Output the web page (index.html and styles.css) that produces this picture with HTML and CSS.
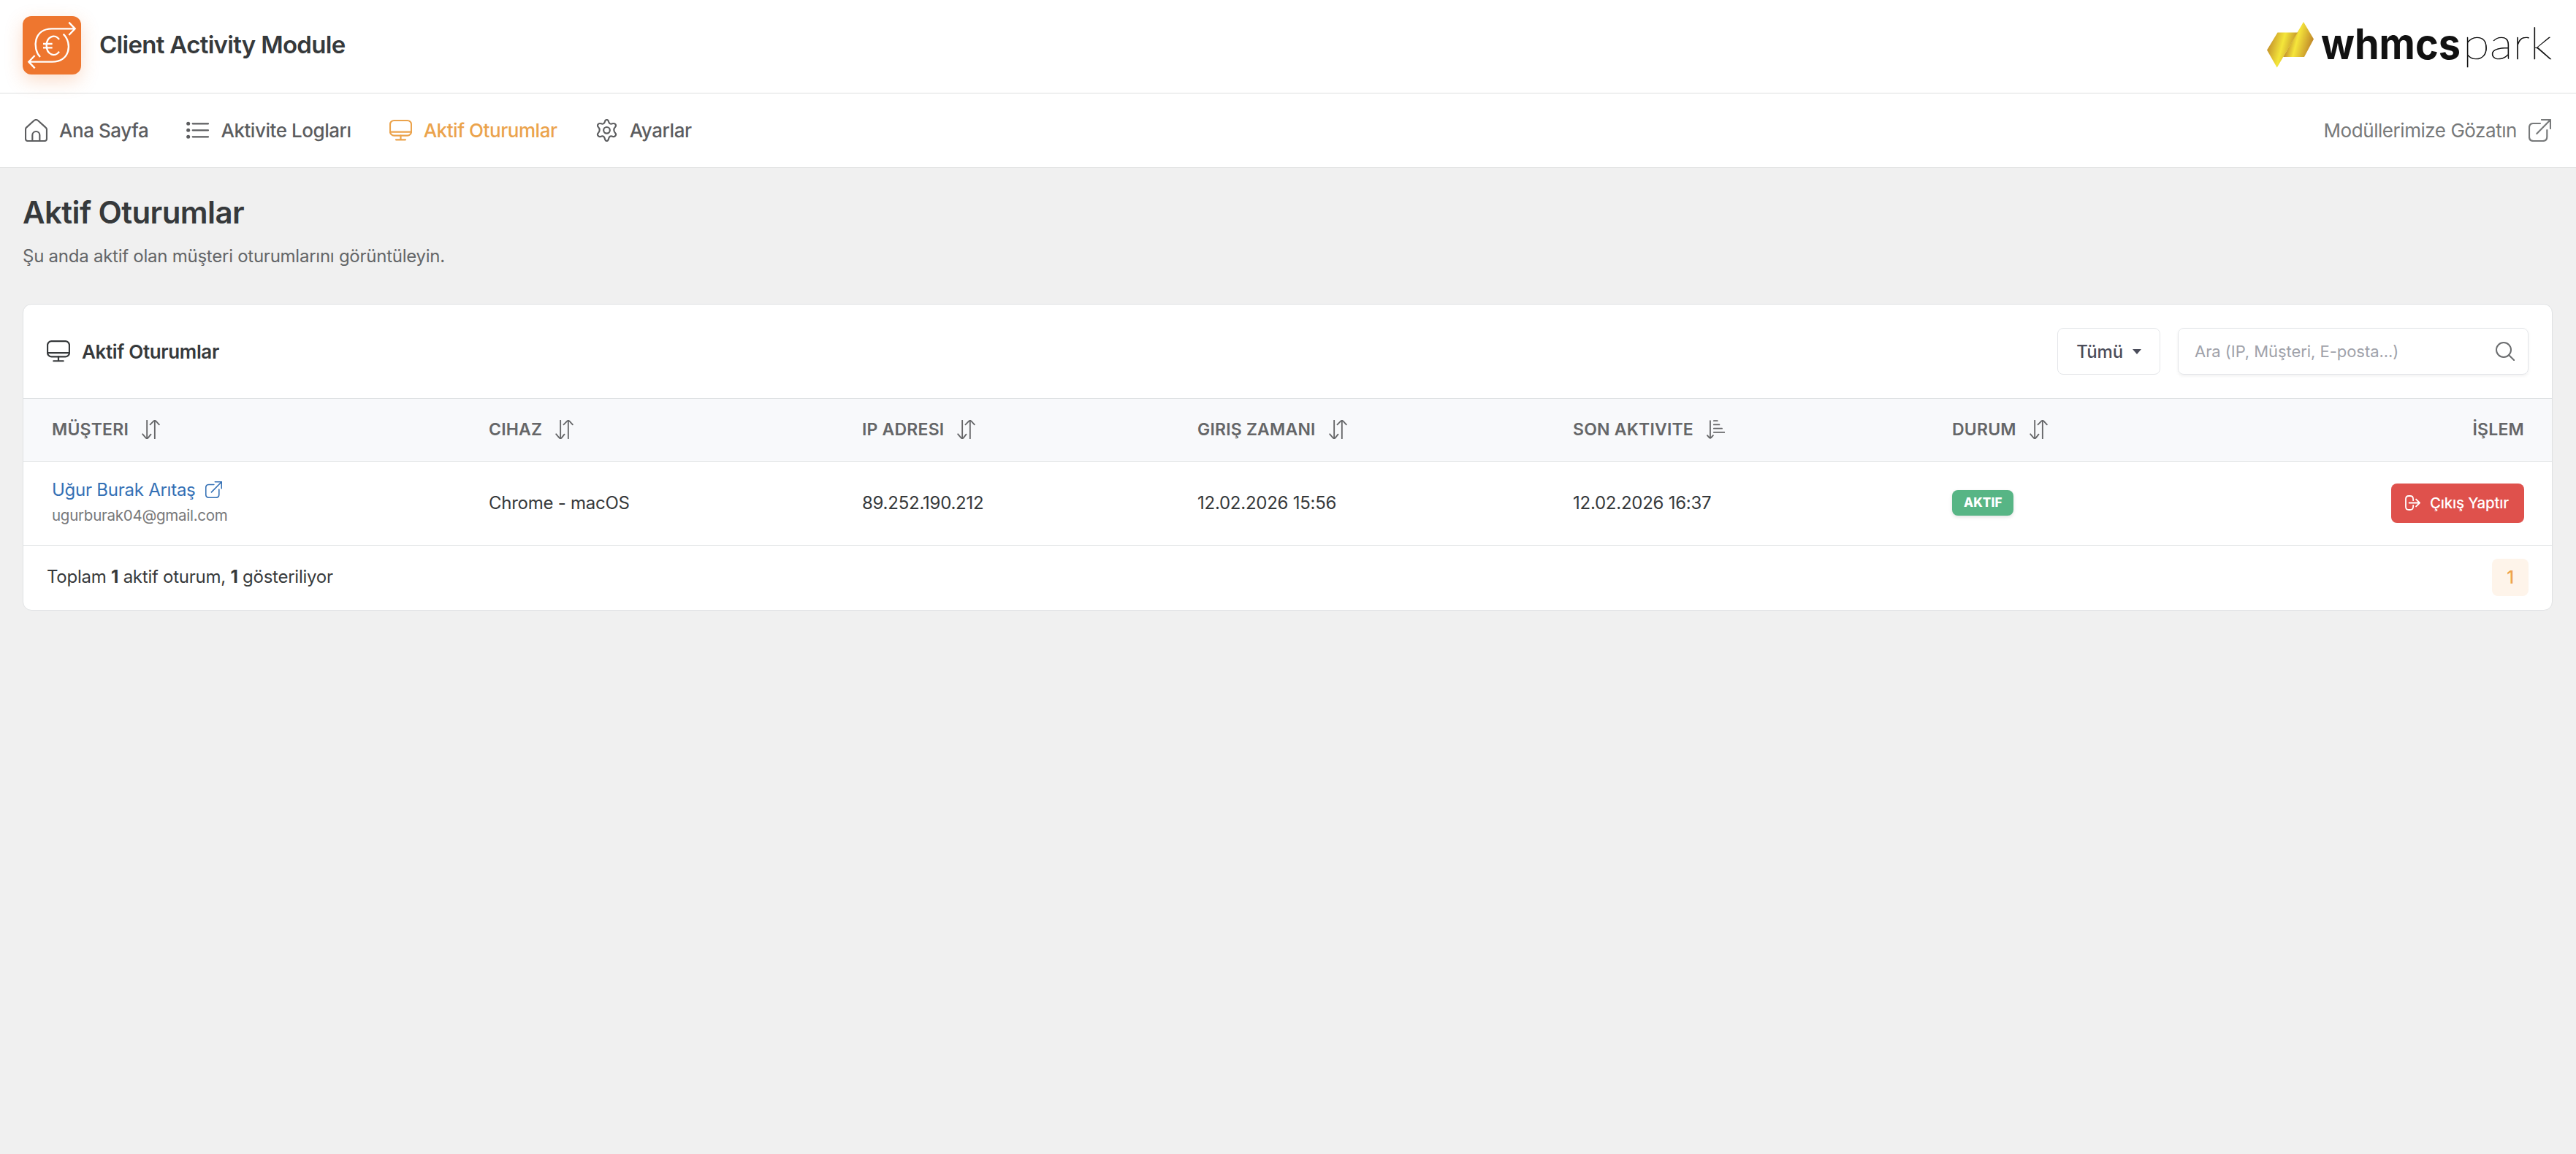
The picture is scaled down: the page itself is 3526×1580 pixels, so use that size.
FILE: index.html
```html
<!DOCTYPE html>
<html lang="tr">
<head>
    <meta charset="UTF-8">
    <meta name="viewport" content="width=device-width, initial-scale=1.0">
    <title>Client Activity Module</title>
    <link rel="stylesheet" href="styles.css">
</head>
<body>
    <!-- Shared icons -->
    <svg class="icon-defs" aria-hidden="true">
        <symbol id="icon-home" viewBox="0 0 93 93">
            <path d="M3 43 Q3 38 7 34 L38 6 Q46 0 54 6 L85 34 Q90 38 90 43 V81 Q90 90 81 90 H12 Q3 90 3 81 Z M31 89 V66 A15 15 0 0 1 61 66 V89" />
        </symbol>
        <symbol id="icon-list" viewBox="0 0 93 93">
            <path d="M26 19 H90 M26 46 H90 M26 73 H90" />
            <g fill="currentColor" stroke="none"><circle cx="8" cy="19" r="7.5" /><circle cx="8" cy="46" r="7.5" /><circle cx="8" cy="73" r="7.5" /></g>
        </symbol>
        <symbol id="icon-monitor" viewBox="0 0 93 93">
            <rect x="3" y="6" width="87" height="62" rx="16" />
            <path d="M3 53 H90 M46.500 68 V85 M27 85 H66" />
        </symbol>
        <symbol id="icon-gear" viewBox="0 0 84 93">
            <path d="M42 3 C47 3 49 6 50 11 C52 19 58 22 65 19 C71 17 75 17 78 22 C81 27 80 30 76 34 C70 40 70 50 76 56 C80 60 81 64 78 68 C75 73 71 74 65 71 C58 68 52 72 50 80 C49 86 47 90 42 90 C37 90 35 86 34 80 C32 72 26 68 19 71 C13 74 9 73 6 68 C3 64 4 60 8 56 C14 50 14 40 8 34 C4 30 3 27 6 22 C9 17 13 17 19 19 C26 22 32 19 34 11 C35 6 37 3 42 3 Z" />
            <circle cx="42" cy="46" r="13" />
        </symbol>
        <symbol id="icon-external" viewBox="0 0 93 93">
            <path d="M48 18 H20 Q3 18 3 35 V73 Q3 90 20 90 H59 Q76 90 76 73 V45 M54 3 H90 V39 M90 3 L34 60" />
        </symbol>
        <symbol id="icon-sort" viewBox="0 0 72 78">
            <path d="M20 2 V76 M2 58 L15 73 Q20 78 25 73 L36 59 M52 76 V2 M33 19 L47 5 Q52 0 57 5 L70 19" />
        </symbol>
        <symbol id="icon-sort-down" viewBox="0 0 76 78">
            <path d="M15 3 V75 M3 64 L11 73 Q15 77 19 73 L27 64 M30 3 H45 M30 19 H53 M30 35 H64 M30 51 H74" />
        </symbol>
        <symbol id="icon-search" viewBox="0 0 78 78">
            <circle cx="33" cy="33" r="30" />
            <path d="M54 54 L76 76" />
        </symbol>
        <symbol id="icon-logout" viewBox="0 0 64 64">
            <path d="M34 22 V16 Q34 3 21 3 H16 Q3 3 3 16 V48 Q3 61 16 61 H21 Q34 61 34 48 V42 M17 32 H61 M46 17 L61 32 L46 47" />
        </symbol>
    </svg>

    <!-- Header -->
    <header class="header">
        <div class="brand">
            <svg class="brand-logo" viewBox="0 0 240 240">
                <path d="M72 168 C38 132 46 52 120 52 H214 M190 26 L215 52 L190 78 M167 74 C206 112 194 188 121 188 H26 M50 162 L25 188 L50 214" />
                <path d="M150 96 C134 72 98 82 98 121 C98 160 134 170 150 146 M84 114 H122 M84 130 H122" />
            </svg>
            <span class="brand-name">Client Activity Module</span>
        </div>
        <svg class="vendor-logo" viewBox="0 0 392 92">
            <defs>
                <linearGradient id="gold-left" x1="0" y1="0.200" x2="1" y2="0.500">
                    <stop offset="0" stop-color="#bd8429" />
                    <stop offset="0.500" stop-color="#f4e63a" />
                    <stop offset="1" stop-color="#b67f28" />
                </linearGradient>
                <linearGradient id="gold-right" x1="0" y1="0.300" x2="1" y2="0.600">
                    <stop offset="0.150" stop-color="#b98029" />
                    <stop offset="0.480" stop-color="#f6e63b" />
                    <stop offset="1" stop-color="#bc8128" />
                </linearGradient>
            </defs>
            <polygon fill="url(#gold-right)" points="50,14 64,37.500 51,62 22,62" />
            <polygon fill="url(#gold-left)" points="0,52.500 14.500,28.500 42,28.500 13.700,76.500" />
            <text class="vendor-bold" x="74" y="65" textLength="191" lengthAdjust="spacingAndGlyphs">whmcs</text>
            <text class="vendor-thin" x="268" y="65" textLength="122" lengthAdjust="spacingAndGlyphs">park</text>
        </svg>
    </header>

    <!-- Navigation -->
    <nav class="nav">
        <a class="nav-item"><svg class="icon"><use href="#icon-home" /></svg>Ana Sayfa</a>
        <a class="nav-item"><svg class="icon"><use href="#icon-list" /></svg>Aktivite Logları</a>
        <a class="nav-item active"><svg class="icon"><use href="#icon-monitor" /></svg>Aktif Oturumlar</a>
        <a class="nav-item"><svg class="icon"><use href="#icon-gear" /></svg>Ayarlar</a>
        <a class="nav-item nav-external">Modüllerimize Gözatın<svg class="icon"><use href="#icon-external" /></svg></a>
    </nav>

    <main class="content">
        <h1>Aktif Oturumlar</h1>
        <p class="subtitle">Şu anda aktif olan müşteri oturumlarını görüntüleyin.</p>

        <section class="card">
            <div class="card-header">
                <h2><svg class="icon"><use href="#icon-monitor" /></svg>Aktif Oturumlar</h2>
                <div class="filters">
                    <button class="dropdown">Tümü<span class="caret"></span></button>
                    <label class="search">
                        <input type="text" placeholder="Ara (IP, Müşteri, E-posta...)">
                        <svg class="icon-search"><use href="#icon-search" /></svg>
                    </label>
                </div>
            </div>

            <!-- Session list -->
            <table class="sessions">
                <thead>
                    <tr>
                        <th class="col-client"><span>MÜŞTERI<svg class="icon-sort"><use href="#icon-sort" /></svg></span></th>
                        <th class="col-device"><span>CIHAZ<svg class="icon-sort"><use href="#icon-sort" /></svg></span></th>
                        <th class="col-ip"><span>IP ADRESI<svg class="icon-sort"><use href="#icon-sort" /></svg></span></th>
                        <th class="col-login"><span>GIRIŞ ZAMANI<svg class="icon-sort"><use href="#icon-sort" /></svg></span></th>
                        <th class="col-last"><span>SON AKTIVITE<svg class="icon-sort"><use href="#icon-sort-down" /></svg></span></th>
                        <th class="col-status"><span>DURUM<svg class="icon-sort"><use href="#icon-sort" /></svg></span></th>
                        <th class="col-action">İŞLEM</th>
                    </tr>
                </thead>
                <tbody>
                    <tr>
                        <td>
                            <a class="client-name">Uğur Burak Arıtaş<svg class="icon-link"><use href="#icon-external" /></svg></a>
                            <div class="client-email">ugurburak04@gmail.com</div>
                        </td>
                        <td>Chrome - macOS</td>
                        <td>89.252.190.212</td>
                        <td>12.02.2026 15:56</td>
                        <td>12.02.2026 16:37</td>
                        <td><span class="badge">AKTIF</span></td>
                        <td class="col-action">
                            <button class="btn-logout"><svg class="icon-logout"><use href="#icon-logout" /></svg>Çıkış Yaptır</button>
                        </td>
                    </tr>
                </tbody>
            </table>

            <div class="card-footer">
                <p>Toplam <b>1</b> aktif oturum, <b>1</b> gösteriliyor</p>
                <a class="page-number">1</a>
            </div>
        </section>
    </main>
</body>
</html>
```
FILE: styles.css
```css
/* Global Styling */
* {
    box-sizing: border-box;
}

body {
    margin: 0;
    font-family: 'Inter', sans-serif;
    font-size: 24px;
    letter-spacing: -0.25px;
    color: #36393b;
    background: #f0f0f0;
}

h1, h2, p {
    margin: 0;
}

button, input {
    font-family: inherit;
}

svg {
    fill: none;
    stroke: currentColor;
    stroke-linecap: round;
    stroke-linejoin: round;
    flex-shrink: 0;
    overflow: visible;
}

.icon-defs {
    display: none;
}

.icon {
    width: 31px;
    height: 31px;
    stroke-width: 6.5;
}

/* Header */
.header {
    display: flex;
    justify-content: space-between;
    align-items: center;
    height: 128px;
    padding: 0 31px 4px;
    background: #fff;
    border-bottom: 1px solid #dfe0e0;
}

.brand {
    display: flex;
    align-items: center;
    gap: 25px;
}

.brand-logo {
    width: 80px;
    height: 80px;
    border-radius: 12px;
    background: #ee762f;
    color: #fff;
    stroke-width: 7;
    stroke-linecap: butt;
    stroke-linejoin: miter;
    box-shadow: 0 8px 24px rgba(238, 118, 47, 0.25);
}

.brand-name {
    margin-top: -2px;
    font-size: 33px;
    font-weight: 600;
    letter-spacing: -0.7px;
    line-height: 40px;
}

.vendor-logo {
    width: 392px;
    height: 92px;
    stroke: none;
}

.vendor-bold {
    font-family: 'Inter', sans-serif;
    font-size: 58px;
    font-weight: 700;
    letter-spacing: 0;
    fill: #111;
}

.vendor-thin {
    font-family: 'Lato', sans-serif;
    font-size: 60px;
    font-weight: 100;
    letter-spacing: 0;
    fill: #111;
    stroke: #111;
    stroke-width: 0.7;
}

/* Navigation */
.nav {
    display: flex;
    align-items: center;
    gap: 52px;
    height: 102px;
    padding: 0 34px 1px;
    background: #fff;
    border-bottom: 1px solid #dfe0e0;
}

.nav-item {
    display: flex;
    align-items: center;
    gap: 16px;
    font-size: 26px;
    font-weight: 500;
    letter-spacing: -0.45px;
    color: #5c5d5f;
}

.nav-item.active {
    color: #eba34c;
}

.nav-external {
    margin-left: auto;
    font-weight: 400;
    color: #77797a;
}

/* Page */
.content {
    padding: 36px 32px 0 31px;
}

h1 {
    font-size: 42px;
    font-weight: 600;
    letter-spacing: -0.6px;
    line-height: 50px;
}

.subtitle {
    margin-top: 17px;
    line-height: 36px;
    color: #646668;
}

.card {
    margin-top: 47px;
    background: #fff;
    border: 1px solid #dfe1e3;
    border-radius: 12px;
    overflow: hidden;
}

.card-header {
    display: flex;
    justify-content: space-between;
    align-items: center;
    height: 129px;
    padding: 0 32px;
    border-bottom: 1px solid #dcdfe1;
}

h2 {
    display: flex;
    align-items: center;
    gap: 16px;
    font-size: 26px;
    font-weight: 600;
    letter-spacing: -0.35px;
}

h2 .icon {
    width: 32px;
    height: 32px;
}

/* Filters */
.filters {
    display: flex;
    gap: 24px;
}

.dropdown {
    display: flex;
    align-items: center;
    justify-content: center;
    gap: 13px;
    width: 141px;
    height: 64px;
    padding: 0;
    border: 1px solid #e4e6e9;
    border-radius: 8px;
    background: #fff;
    font-size: 24px;
    font-weight: 500;
    letter-spacing: -0.25px;
    color: #4b4d5a;
}

.caret {
    border: 6px solid transparent;
    border-top: 7px solid #4b4d5a;
    border-bottom: 0;
}

.search {
    display: flex;
    align-items: center;
    width: 480px;
    height: 64px;
    padding: 0 18px 0 22px;
    border: 1px solid #e4e6e9;
    border-radius: 8px;
    box-shadow: 0 2px 4px rgba(0, 0, 0, 0.06);
}

.search input {
    flex: 1;
    min-width: 0;
    padding: 0;
    border: 0;
    outline: 0;
    font-size: 22px;
    letter-spacing: -0.05px;
}

.search input::placeholder {
    color: #a0a2aa;
}

.icon-search {
    width: 26px;
    height: 26px;
    color: #6b6d6f;
    stroke-width: 6;
}

/* Session list */
.sessions {
    width: 100%;
    border-collapse: collapse;
    table-layout: fixed;
}

.sessions th, .sessions td {
    padding: 0 0 0 39px;
    text-align: left;
    border-bottom: 1px solid #dcdfe1;
}

.sessions th {
    height: 85px;
    background: #f8f9fb;
    font-size: 23px;
    font-weight: 600;
    letter-spacing: 0.2px;
    color: #656668;
}

.sessions th span {
    display: flex;
    align-items: center;
    gap: 18px;
}

.sessions td {
    height: 115px;
}

.col-client { width: 598px; }
.col-device { width: 511px; }
.col-ip { width: 459px; }
.col-login { width: 514px; }
.col-last { width: 519px; }
.col-status { width: 400px; }

.sessions .col-action {
    padding-right: 38px;
    text-align: right;
}

.icon-sort {
    width: 25px;
    height: 26px;
    stroke-width: 5.5;
}

.client-name {
    display: flex;
    align-items: center;
    gap: 13px;
    line-height: 34px;
    color: #3470b5;
}

.icon-link {
    width: 23px;
    height: 23px;
    stroke-width: 6.5;
}

.client-email {
    font-size: 20.5px;
    line-height: 36px;
    color: #77787a;
}

.badge {
    display: inline-block;
    padding: 0 16px;
    border-radius: 8px;
    background: #57b585;
    color: #fff;
    font-size: 17px;
    font-weight: 800;
    letter-spacing: 0.1px;
    line-height: 35px;
    box-shadow: 0 2px 5px rgba(0, 0, 0, 0.12);
}

.btn-logout {
    display: inline-flex;
    align-items: center;
    justify-content: center;
    gap: 13px;
    width: 182px;
    height: 54px;
    padding: 0 2px 0 0;
    border: 0;
    border-radius: 8px;
    background: #df514c;
    color: #fff;
    font-size: 20.5px;
    font-weight: 500;
    letter-spacing: -0.2px;
    vertical-align: middle;
}

.icon-logout {
    width: 21px;
    height: 21px;
    stroke-width: 5.5;
}

/* Pagination */
.card-footer {
    display: flex;
    justify-content: space-between;
    align-items: center;
    height: 88px;
    padding: 0 32px;
}

.card-footer p {
    margin-top: -2px;
}

.page-number {
    width: 50px;
    border-radius: 8px;
    background: #fef4ea;
    color: #efa34c;
    font-weight: 500;
    line-height: 51px;
    text-align: center;
}
```
